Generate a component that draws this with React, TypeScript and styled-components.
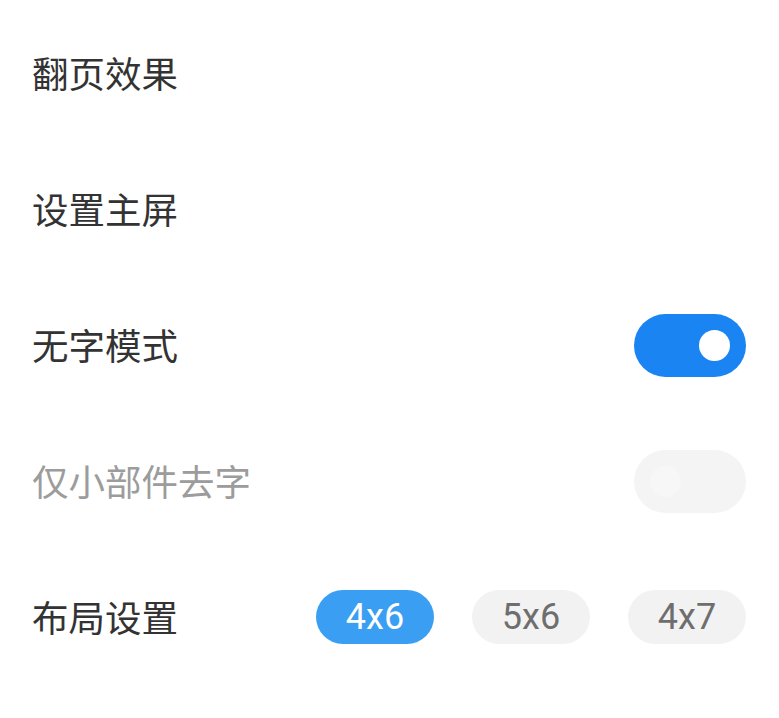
import styled, { createGlobalStyle } from "styled-components";

const GlobalStyle = createGlobalStyle`
  html, body {
    margin: 0;
    padding: 0;
    background: #ffffff;
  }
  body {
    font-family: "Noto Sans CJK SC", "Noto Sans", sans-serif;
  }
`;

const Page = styled.div`
  display: flex;
  flex-direction: column;
  padding: 5px 33px 0 32px;
`;

const Row = styled.div`
  height: 136px;
  display: flex;
  align-items: center;
  justify-content: space-between;
`;

const Label = styled.span<{ $muted?: boolean }>`
  font-size: 36.5px;
  line-height: 1;
  color: ${(p) => (p.$muted ? "#9c9c9c" : "#333333")};
`;

const Toggle = styled.div<{ $on?: boolean }>`
  width: 112px;
  height: 63px;
  border-radius: 32px;
  background: ${(p) => (p.$on ? "#1a84f3" : "#f4f4f4")};
  display: flex;
  align-items: center;
  justify-content: ${(p) => (p.$on ? "flex-end" : "flex-start")};
  padding: 0 16px;
  box-sizing: border-box;
`;

const Knob = styled.div<{ $on?: boolean }>`
  width: 31px;
  height: 31px;
  border-radius: 50%;
  background: ${(p) => (p.$on ? "#ffffff" : "#f7f7f7")};
`;

const Chips = styled.div`
  display: flex;
  gap: 38px;
`;

const Chip = styled.div<{ $active?: boolean }>`
  width: 118px;
  height: 54px;
  border-radius: 27px;
  display: flex;
  align-items: center;
  justify-content: center;
  background: ${(p) => (p.$active ? "#3a9ef2" : "#f2f2f2")};
  color: ${(p) => (p.$active ? "#ffffff" : "#6e6e6e")};
  font-family: Roboto, "Noto Sans", sans-serif;
  font-size: 36px;
  line-height: 1;
`;

const layouts = ["4x6", "5x6", "4x7"];

export default function App() {
  return (
    <>
      <GlobalStyle />
      <Page>
        <Row>
          <Label>翻页效果</Label>
        </Row>
        <Row>
          <Label>设置主屏</Label>
        </Row>
        <Row>
          <Label>无字模式</Label>
          <Toggle $on>
            <Knob $on />
          </Toggle>
        </Row>
        <Row>
          <Label $muted>仅小部件去字</Label>
          <Toggle>
            <Knob />
          </Toggle>
        </Row>
        <Row>
          <Label>布局设置</Label>
          <Chips>
            {layouts.map((l, i) => (
              <Chip key={l} $active={i === 0}>
                {l}
              </Chip>
            ))}
          </Chips>
        </Row>
      </Page>
    </>
  );
}
